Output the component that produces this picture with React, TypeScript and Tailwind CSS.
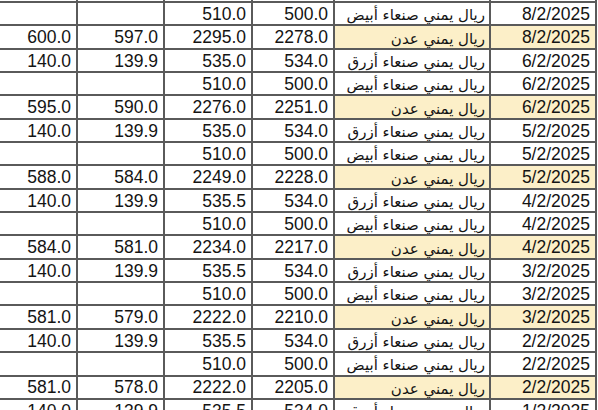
const ABYAD = "ريال يمني صنعاء أبيض";
const ADEN = "ريال يمني عدن";
const AZRAQ = "ريال يمني صنعاء أزرق";

type Row = [string, string, string, string, string, string];

const rows: Row[] = [
  ["", "", "510.0", "500.0", ABYAD, "8/2/2025"],
  ["600.0", "597.0", "2295.0", "2278.0", ADEN, "8/2/2025"],
  ["140.0", "139.9", "535.0", "534.0", AZRAQ, "6/2/2025"],
  ["", "", "510.0", "500.0", ABYAD, "6/2/2025"],
  ["595.0", "590.0", "2276.0", "2251.0", ADEN, "6/2/2025"],
  ["140.0", "139.9", "535.0", "534.0", AZRAQ, "5/2/2025"],
  ["", "", "510.0", "500.0", ABYAD, "5/2/2025"],
  ["588.0", "584.0", "2249.0", "2228.0", ADEN, "5/2/2025"],
  ["140.0", "139.9", "535.5", "534.0", AZRAQ, "4/2/2025"],
  ["", "", "510.0", "500.0", ABYAD, "4/2/2025"],
  ["584.0", "581.0", "2234.0", "2217.0", ADEN, "4/2/2025"],
  ["140.0", "139.9", "535.5", "534.0", AZRAQ, "3/2/2025"],
  ["", "", "510.0", "500.0", ABYAD, "3/2/2025"],
  ["581.0", "579.0", "2222.0", "2210.0", ADEN, "3/2/2025"],
  ["140.0", "139.9", "535.5", "534.0", AZRAQ, "2/2/2025"],
  ["", "", "510.0", "500.0", ABYAD, "2/2/2025"],
  ["581.0", "578.0", "2222.0", "2205.0", ADEN, "2/2/2025"],
  ["140.0", "139.9", "535.5", "534.0", AZRAQ, "1/2/2025"],
];

const line = "border-r-2 border-b-2 border-[#5a5a5a]";
const cell = "flex items-center justify-end pr-[5px] pt-[2px] overflow-hidden whitespace-nowrap " + line;

export default function App() {
  return (
    <div className="w-[598px] h-[410px] overflow-hidden bg-white text-[#141414] font-['Liberation_Sans',Arial,sans-serif]">
      <div className="grid grid-cols-[78px_87px_88px_82px_156px_106px] grid-rows-[3px] auto-rows-[23.35px] w-[597px] text-[17.5px] leading-none">
        {/* sliver of the row above the viewport */}
        <div className={line}></div>
        <div className={line}></div>
        <div className={line}></div>
        <div className={line}></div>
        <div className={line}></div>
        <div className={line}></div>
        {rows.map((r, i) => {
          const aden = r[4] === ADEN;
          return [
            <div key={i + "a"} className={cell}>{r[0]}</div>,
            <div key={i + "b"} className={cell}>{r[1]}</div>,
            <div key={i + "c"} className={cell}>{r[2]}</div>,
            <div key={i + "d"} className={cell}>{r[3]}</div>,
            <div
              key={i + "e"}
              dir="rtl"
              className={
                "flex items-center justify-start pr-[4px] pt-[4px] overflow-hidden whitespace-nowrap text-[15px] font-['DejaVu_Sans',sans-serif] " +
                line +
                (aden ? " bg-[#fcefc8]" : "")
              }
            >
              {r[4]}
            </div>,
            <div key={i + "f"} className={cell + (aden ? " bg-[#fcefc8]" : "")}>{r[5]}</div>,
          ];
        })}
      </div>
    </div>
  );
}
